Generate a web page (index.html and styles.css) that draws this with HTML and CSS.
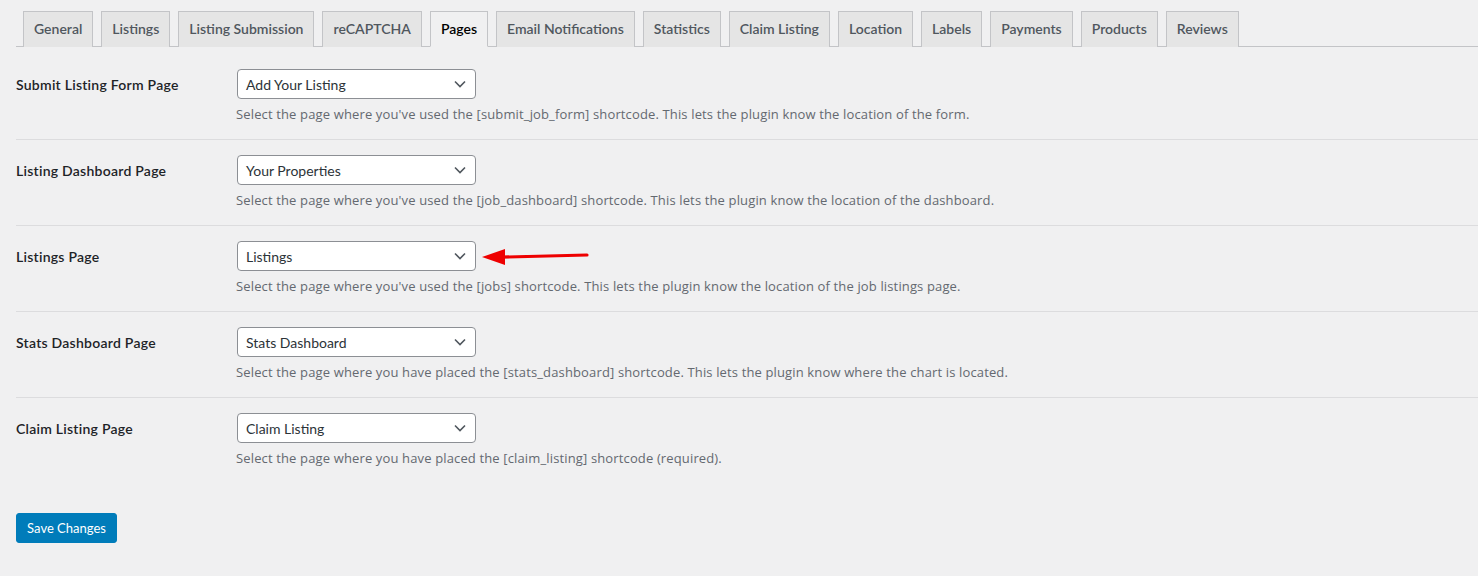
FILE: index.html
```html
<!DOCTYPE html>
<html>
<head>
<meta charset="utf-8">
<link rel="stylesheet" href="styles.css">
</head>
<body>
<div class="wrap">
  <nav class="tabs">
    <a class="tab">General</a>
    <a class="tab">Listings</a>
    <a class="tab">Listing Submission</a>
    <a class="tab">reCAPTCHA</a>
    <a class="tab active">Pages</a>
    <a class="tab">Email Notifications</a>
    <a class="tab">Statistics</a>
    <a class="tab">Claim Listing</a>
    <a class="tab">Location</a>
    <a class="tab">Labels</a>
    <a class="tab">Payments</a>
    <a class="tab">Products</a>
    <a class="tab">Reviews</a>
  </nav>

  <div class="form">
    <div class="row">
      <div class="label">Submit Listing Form Page</div>
      <div class="field">
        <div class="select"><span>Add Your Listing</span><svg class="chev" viewBox="0 0 12 8" width="12" height="8"><path d="M1 1.5 L6 6.5 L11 1.5" fill="none" stroke="#50575e" stroke-width="1.6"/></svg></div>
        <p class="desc">Select the page where you've used the [submit_job_form] shortcode. This lets the plugin know the location of the form.</p>
      </div>
    </div>
    <div class="row">
      <div class="label">Listing Dashboard Page</div>
      <div class="field">
        <div class="select"><span>Your Properties</span><svg class="chev" viewBox="0 0 12 8" width="12" height="8"><path d="M1 1.5 L6 6.5 L11 1.5" fill="none" stroke="#50575e" stroke-width="1.6"/></svg></div>
        <p class="desc">Select the page where you've used the [job_dashboard] shortcode. This lets the plugin know the location of the dashboard.</p>
      </div>
    </div>
    <div class="row">
      <div class="label">Listings Page</div>
      <div class="field">
        <div class="select-wrap">
          <div class="select"><span>Listings</span><svg class="chev" viewBox="0 0 12 8" width="12" height="8"><path d="M1 1.5 L6 6.5 L11 1.5" fill="none" stroke="#50575e" stroke-width="1.6"/></svg></div>
          <svg class="arrow" viewBox="0 0 112 20" width="112" height="20"><path d="M20 11.2 L106 9" stroke="#ee0000" stroke-width="3.2" stroke-linecap="round" fill="none"/><path d="M1 11 L24 3 L24 19 Z" fill="#ee0000"/></svg>
        </div>
        <p class="desc">Select the page where you've used the [jobs] shortcode. This lets the plugin know the location of the job listings page.</p>
      </div>
    </div>
    <div class="row">
      <div class="label">Stats Dashboard Page</div>
      <div class="field">
        <div class="select"><span>Stats Dashboard</span><svg class="chev" viewBox="0 0 12 8" width="12" height="8"><path d="M1 1.5 L6 6.5 L11 1.5" fill="none" stroke="#50575e" stroke-width="1.6"/></svg></div>
        <p class="desc">Select the page where you have placed the [stats_dashboard] shortcode. This lets the plugin know where the chart is located.</p>
      </div>
    </div>
    <div class="row last">
      <div class="label">Claim Listing Page</div>
      <div class="field">
        <div class="select"><span>Claim Listing</span><svg class="chev" viewBox="0 0 12 8" width="12" height="8"><path d="M1 1.5 L6 6.5 L11 1.5" fill="none" stroke="#50575e" stroke-width="1.6"/></svg></div>
        <p class="desc">Select the page where you have placed the [claim_listing] shortcode (required).</p>
      </div>
    </div>
  </div>

  <div class="submit">
    <button class="btn">Save Changes</button>
  </div>
</div>
</body>
</html>
```

FILE: styles.css
```css
html, body {
  margin: 0;
  padding: 0;
  background: #f0f0f1;
}
body {
  font-family: "Lato", "Open Sans", sans-serif;
  color: #1d2327;
  width: 1478px;
  height: 576px;
  overflow: hidden;
}
.wrap {
  padding: 11px 0 0 16px;
}
.tabs {
  display: flex;
  border-bottom: 1px solid #c3c4c7;
  padding-left: 7px;
  gap: 8px;
}
.tab {
  display: block;
  box-sizing: border-box;
  height: 36px;
  padding: 0 10px;
  line-height: 34px;
  font-size: 14px;
  font-weight: 600;
  color: #50575e;
  background: #e5e5e5;
  border: 1px solid #c3c4c7;
  border-bottom: none;
  margin-bottom: -1px;
  white-space: nowrap;
}
.tab.active {
  background: #f0f0f1;
  color: #000;
  border-bottom: 1px solid #f0f0f1;
}
.form {
  margin-top: 7px;
}
.row {
  display: flex;
  border-bottom: 1px solid #dcdcde;
  height: 85px;
}
.row.last {
  border-bottom: none;
}
.label {
  width: 220px;
  flex: none;
  padding-top: 22px;
  font-size: 14px;
  font-weight: 600;
  line-height: 18px;
  letter-spacing: 0.25px;
  color: #1d2327;
}
.field {
  padding-top: 15px;
}
.select-wrap {
  position: relative;
  width: 239px;
}
.select {
  box-sizing: border-box;
  width: 239px;
  height: 30px;
  margin-left: 1px;
  border: 1px solid #8c8f94;
  border-radius: 4px;
  background: #fff;
  display: flex;
  align-items: center;
  justify-content: space-between;
  padding: 0 9px 0 8px;
  font-size: 14px;
  color: #2c3338;
}
.chev {
  display: block;
}
.arrow {
  position: absolute;
  left: 245px;
  top: 5px;
}
.desc {
  margin: 5px 0 0;
  font-family: "Open Sans", "Lato", sans-serif;
  font-size: 13px;
  line-height: 20px;
  letter-spacing: 0.14px;
  color: #646970;
}
.submit {
  padding-top: 30px;
}
.btn {
  font-family: inherit;
  font-size: 13px;
  color: #fff;
  background: #007cba;
  border: 1px solid #007cba;
  border-radius: 3px;
  height: 30px;
  padding: 0 10px;
  width: 101px;
  cursor: pointer;
}
```
